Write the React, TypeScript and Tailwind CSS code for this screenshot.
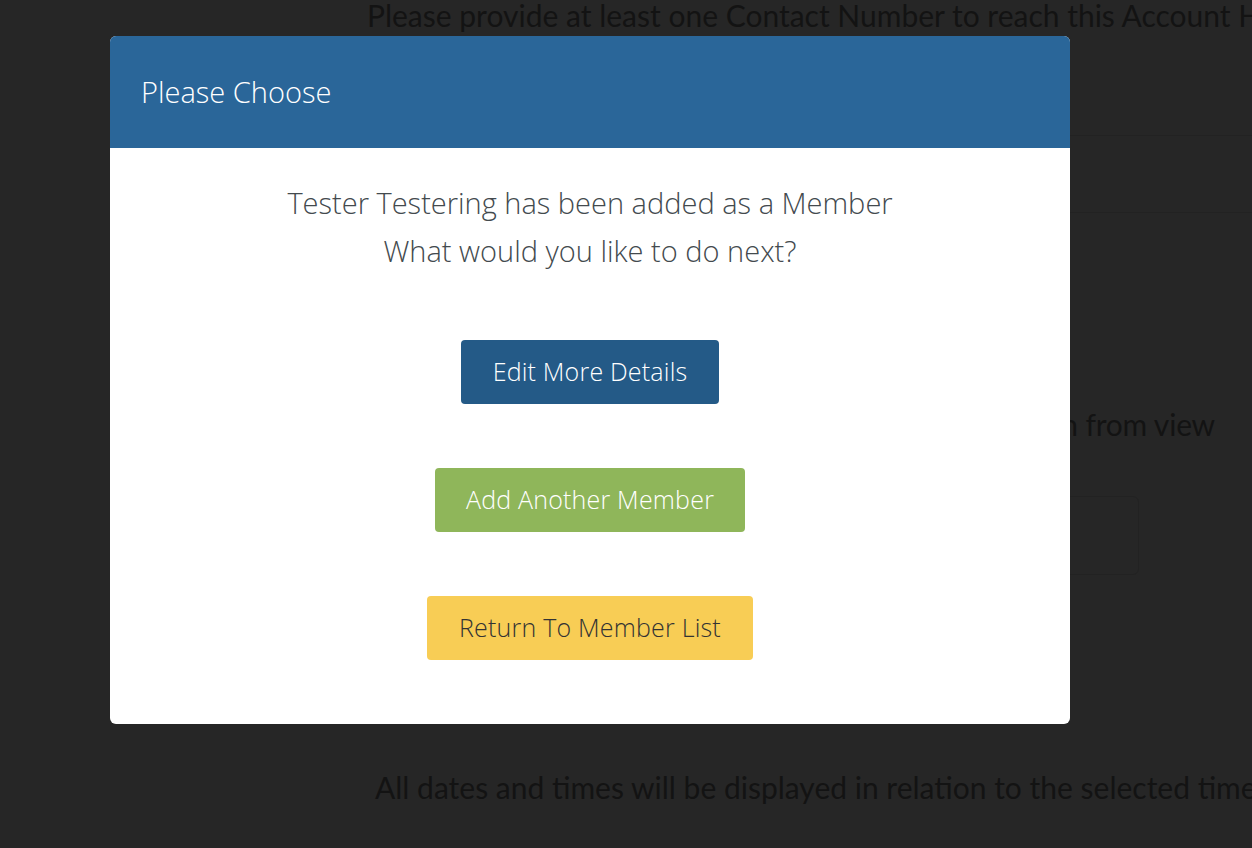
import React from 'react';

const font = { fontFamily: 'Lato, "Open Sans", sans-serif' };
const modalFont = { fontFamily: '"Open Sans", Lato, sans-serif' };

export default function App() {
  return (
    <div className="relative h-[848px] w-full overflow-hidden bg-[#262626]" style={font}>
      {/* page underneath the backdrop */}
      <div className="flex flex-col pl-[367px] text-[#131313]">
        <div className="whitespace-nowrap text-[30px] leading-[30px]">
          Please provide at least one Contact Number to reach this Account Holder
        </div>
        <div className="mt-[105px] h-px bg-[#222222]" />
        <div className="mt-[76px] h-px bg-[#222222]" />
        <div className="mt-[196px] w-[848px] whitespace-nowrap text-right text-[30px] leading-[30px] tracking-[-0.2px]">
          Tick this box to hide this section from view
        </div>
        <div className="mt-[57px] h-[79px] w-[772px] rounded-md border border-[#222222]" />
        <div className="mt-[197px] whitespace-nowrap pl-[8px] text-[30px] leading-[30px]">
          All dates and times will be displayed in relation to the selected timezone
        </div>
      </div>

      {/* modal */}
      <div
        className="absolute left-[110px] top-[36px] w-[960px] overflow-hidden rounded-md bg-white"
        style={modalFont}
      >
        <div className="flex h-[112px] items-center bg-[#2a6699] px-[31px] text-[29px] font-light text-white">
          Please Choose
        </div>
        <div className="flex flex-col items-center pb-[64px] pt-[31px]">
          <p className="text-center text-[29px] font-light leading-[48px] text-[#434a4e]">
            Tester Testering has been added as a Member
            <br />
            What would you like to do next?
          </p>
          <div className="mt-[65px] flex flex-col items-center gap-[64px]">
            <button className="h-[64px] w-[258px] rounded-[4px] bg-[#245a87] text-[25px] font-light tracking-[0.2px] text-white">
              Edit More Details
            </button>
            <button className="h-[64px] w-[310px] rounded-[4px] bg-[#8fb65a] text-[25px] font-light tracking-[0.2px] text-white">
              Add Another Member
            </button>
            <button className="h-[64px] w-[326px] rounded-[4px] bg-[#f8cd55] text-[25px] font-light tracking-[0.2px] text-[#333333]">
              Return To Member List
            </button>
          </div>
        </div>
      </div>
    </div>
  );
}
